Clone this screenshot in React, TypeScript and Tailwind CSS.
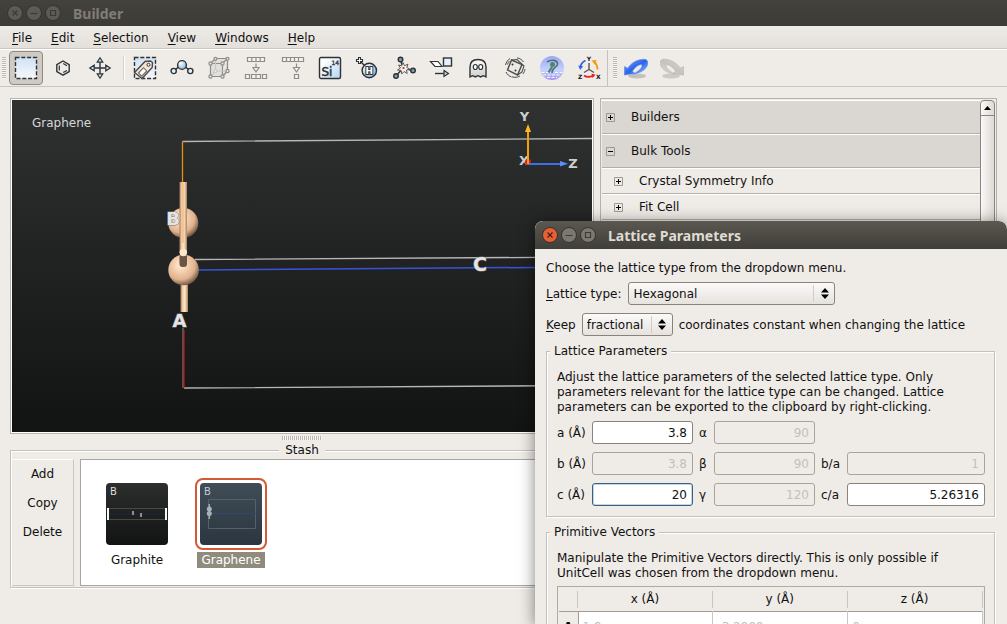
import { useState, type ReactNode } from "react";

interface Tool {
  label: string;
  icon: ReactNode;
}

const INK = "#2e3436";
const GREY = "#8e8c88";

function Icon({ children }: { children: ReactNode }) {
  return (
    <svg width="24" height="24" viewBox="0 0 24 24" fill="none" stroke={INK} strokeWidth="1.4" className="shrink-0">
      {children}
    </svg>
  );
}

const selectTools: Tool[] = [
  {
    label: "Select",
    icon: (
      <Icon>
        <rect x="1.5" y="1.5" width="21" height="21" fill="url(#sky)" strokeDasharray="4 1.8" />
      </Icon>
    ),
  },
  {
    label: "Sketch",
    icon: (
      <Icon>
        <path d="M12 5l6.200 3.600v7L12 19.200l-6.200-3.600v-7z" />
        <path d="M8.300 9.600v5M12.200 7.500l3.800 2.200M12.200 16.600l3.800-2.200" strokeWidth="1.200" />
      </Icon>
    ),
  },
  {
    label: "Move",
    icon: (
      <Icon>
        <path d="M12 6v12M6 12h12" />
        <path
          d="M12 1.800l2.800 4.400H9.200zM12 22.200l2.800-4.400H9.200zM1.800 12l4.400-2.800v5.600zM22.200 12l-4.400-2.800v5.600z"
          fill="#dbe7f4"
          strokeWidth="1.200"
        />
      </Icon>
    ),
  },
];

const editTools: Tool[] = [
  {
    label: "Tags",
    icon: (
      <Icon>
        <rect x="1.500" y="1.500" width="21" height="21" fill="url(#sky)" strokeDasharray="4 1.800" />
        <path d="M1.500 16.500L12 5.500l5.500-.5 2 1.500-.3 5L9 22.500z" fill="#f6e2cf" stroke="#4a4a4a" />
        <path d="M5.500 17l5-5.300 3.200 3.200-5 5.200z" fill="#fff" stroke="#6b6b6b" strokeWidth="1.100" />
        <circle cx="15.500" cy="8.800" r="1.500" fill="#fff" strokeWidth="1" />
      </Icon>
    ),
  },
  {
    label: "Bonds",
    icon: (
      <Icon>
        <path d="M5 14l4-3.500M19 14l-4-3.500" />
        <circle cx="12" cy="9" r="4.400" fill="url(#ball)" />
        <circle cx="3.700" cy="15" r="2.600" fill="#e4edf7" />
        <circle cx="20.300" cy="15" r="2.600" fill="#e4edf7" />
      </Icon>
    ),
  },
  {
    label: "Supercell",
    icon: (
      <Icon>
        <g stroke={GREY} strokeWidth="1.200">
          <path d="M3.500 7.500h12v13h-12zM3.500 7.500l5-5h12l-5 5M20.500 2.500v12.500l-5 5.500" fill="#e2e0dc" />
          <path d="M8.500 2.500V15h12M8.500 15l-5 5.500" stroke="#c9c7c3" />
          <g fill="#efedea">
            <circle cx="3.500" cy="7.500" r="1.600" />
            <circle cx="15.500" cy="7.500" r="1.600" />
            <circle cx="3.500" cy="20.500" r="1.600" />
            <circle cx="15.500" cy="20.500" r="1.600" />
            <circle cx="8.500" cy="2.800" r="1.500" />
            <circle cx="20.500" cy="2.800" r="1.500" />
            <circle cx="20.500" cy="15" r="1.600" />
            <circle cx="8.500" cy="15" r="1.500" stroke="#c9c7c3" />
          </g>
        </g>
      </Icon>
    ),
  },
  {
    label: "Split layers",
    icon: (
      <Icon>
        <g stroke={GREY} fill="#f4f2ef" strokeWidth="1.200">
          <path d="M3.500 1.500h17v4h-17zM7.800 1.500v4M12 1.500v4M16.200 1.500v4" />
          <path d="M12 7.500v4" />
          <path d="M9 11.500h6l-3 4.500z" />
          <path d="M1.500 18.500h4v4h-4zM7.500 18.500h9v4h-9zM12 18.500v4M18.500 18.500h4v4h-4z" />
        </g>
      </Icon>
    ),
  },
  {
    label: "Reduce layers",
    icon: (
      <Icon>
        <g stroke={GREY} fill="#f4f2ef" strokeWidth="1.200">
          <path d="M1.500 1.500h21v4h-21zM5.500 1.500v4M9.500 1.500v4M13.500 1.500v4M17.500 1.500v4" />
          <path d="M15.500 7.500v4" />
          <path d="M12.500 11.500h6l-3 4.500z" />
          <path d="M13.500 18.500h4v4h-4z" />
        </g>
      </Icon>
    ),
  },
  {
    label: "Element",
    icon: (
      <Icon>
        <rect x="1.500" y="1.500" width="21" height="21" rx="1.500" fill="url(#tile)" />
        <g fill={INK} stroke={INK} fontFamily="'DejaVu Sans', sans-serif">
          <text x="3.500" y="19.500" fontSize="12" strokeWidth=".5">Si</text>
          <text x="13.500" y="8.800" fontSize="6" strokeWidth=".3">14</text>
        </g>
      </Icon>
    ),
  },
  {
    label: "Add hydrogen",
    icon: (
      <Icon>
        <path d="M6 6l4 4" />
        <circle cx="14.300" cy="14.500" r="7.200" fill="url(#ball)" />
        <path d="M3.500 1.500h2v2h2v2h-2v2h-2v-2h-2v-2h2z" fill="#fff" strokeWidth="1.100" />
        <text
          x="14.300"
          y="18"
          fontSize="9"
          fontWeight="bold"
          fontFamily="'DejaVu Sans', sans-serif"
          textAnchor="middle"
          fill="#fff"
          strokeWidth="2"
          paintOrder="stroke"
        >
          H
        </text>
      </Icon>
    ),
  },
  {
    label: "Passivate",
    icon: (
      <Icon>
        <path d="M11 12L8.500 4M11 12l9.500 2.500M11 12l-7 8" />
        <path
          d="M11 6.500l1.500 3.200 3.500-1.500-1.200 3.200 3 1.800-3.300.8.700 3.500-3-2-2.500 2.500-.5-3.500-3.700-.5 3-2-2-3 3.200.8z"
          fill="#f3f1ee"
          stroke="#5c5c5c"
          strokeWidth="1"
        />
        <circle cx="11.500" cy="12" r="1.100" fill="#e11" stroke="none" />
        <circle cx="8.500" cy="3.500" r="2.300" fill="#7f9dbd" />
        <circle cx="4" cy="20" r="2.300" fill="#7f9dbd" />
        <circle cx="21" cy="14.500" r="2.300" fill="#7f9dbd" />
      </Icon>
    ),
  },
  {
    label: "Transform cell",
    icon: (
      <Icon>
        <path d="M1.500 5.500h7.500l4 5H6z" fill="#fff" strokeWidth="1.200" />
        <rect x="14.500" y="2" width="8" height="8" fill="#e9f1fa" />
        <path d="M6 17.500h10" />
        <path d="M15 14.500l4.500 3-4.500 3z" fill="#b9d3ec" strokeWidth="1.200" />
      </Icon>
    ),
  },
  {
    label: "Ghost atom",
    icon: (
      <Icon>
        <path
          d="M4 21V11c0-5 3-7.500 8-7.500s8 2.500 8 7.500v10l-2.700-1.300-2.600 1.300-2.700-1.300L9.300 21l-2.600-1.300z"
          fill="url(#ghost)"
        />
        <ellipse cx="9.300" cy="11" rx="2" ry="2.500" fill="#fff" strokeWidth="1.200" />
        <ellipse cx="14.700" cy="11" rx="2" ry="2.500" fill="#fff" strokeWidth="1.200" />
      </Icon>
    ),
  },
  {
    label: "Rattle",
    icon: (
      <Icon>
        <g stroke="#4b4d4e">
          <path d="M8.500 4l10.500 4.500-4.500 10.500L4.500 14z" fill="#eceae6" />
          <path d="M8.500 4l5.500-.5L21 10l-2 6-4.500 3M19 8.500l2 1.500" strokeWidth="1.100" />
          <path d="M2.500 9c.8-3 2.200-5 4.500-6.500M4.500 8.500c.3-1.500 1-2.700 2-3.500M14 1.800c3 .6 5 2 6.500 4.200M3 16c1.200 2.500 3 4 5.500 5M9 20.800c3 1 5.500.6 8-.8M22 13c-.2 2-1 3.600-2.200 5" strokeWidth="1" />
        </g>
        <circle cx="9.500" cy="8.500" r="1" fill={INK} stroke="none" />
        <circle cx="12.500" cy="14.500" r="1" fill={INK} stroke="none" />
      </Icon>
    ),
  },
  {
    label: "Plugin",
    icon: (
      <Icon>
        <circle cx="12" cy="12" r="12" fill="url(#orb)" stroke="none" />
        <path d="M1.500 16.500h21M3 19h18M7 21.500h10" stroke="#fff" strokeWidth=".9" strokeDasharray="3 1.500" />
        <path d="M7 6c4-3 10.500-2 10.500 2 0 3.500-5.500 3-5.500 9" stroke="#51727f" strokeWidth="1.700" />
        <path d="M12 11l-3.500 5.500" stroke="#55806f" strokeWidth="2.200" />
        <circle cx="12.500" cy="8.500" r="2.500" fill="#528568" stroke="none" />
      </Icon>
    ),
  },
  {
    label: "Rotate axes",
    icon: (
      <Icon>
        <path d="M12 7v7M12 13.500l-5 3M12 13.500l5 3" stroke="#555" />
        <path d="M8.500 4.500C5.500 6 4 8 3.500 10.500" stroke="#3465e0" strokeWidth="1.800" />
        <path d="M1.200 9.500l5 .8-3 3.700z" fill="#3465e0" stroke="none" />
        <path d="M20.500 13.500c0-3-1-5.500-3-7.500" stroke="#f59b0c" strokeWidth="1.800" />
        <path d="M14.500 4.500l5-.5-1.500 4.500z" fill="#f59b0c" stroke="none" />
        <path d="M7 19.500c2.500 1.700 6 1.700 9 .2" stroke="#ee1c1c" strokeWidth="1.800" />
        <path d="M14.500 17.500l4 1.300-3 3.300z" fill="#ee1c1c" stroke="none" />
        <g fill="#111" stroke="none" fontFamily="'DejaVu Sans', sans-serif" fontWeight="bold" fontSize="6">
          <text x="9.700" y="5">Y</text>
          <text x="1" y="23">Z</text>
          <text x="19" y="23">X</text>
        </g>
      </Icon>
    ),
  },
];

const arrowPath =
  "M.3 19L.5 10.500l3.200 1.700C7.500 6.500 14 3.200 20.500 3.300c4 .2 4 4.700 2 7.700-2.500 4-8 6.500-13.500 7 3.500-1.500 9-5.200 9-8.200 0-1.500-1.500-1.500-3-.7-2.500 1.200-5 3.700-6.500 6.200l2.300 2.200z";

const historyTools: Tool[] = [
  {
    label: "Undo",
    icon: (
      <Icon>
        <ellipse cx="13" cy="20" rx="9" ry="2.500" fill="#000" opacity=".18" stroke="none" />
        <path d={arrowPath} fill="url(#undo)" stroke="#5c86e6" strokeWidth=".6" />
      </Icon>
    ),
  },
  {
    label: "Redo",
    icon: (
      <Icon>
        <ellipse cx="11" cy="20" rx="9" ry="2.500" fill="#000" opacity=".14" stroke="none" />
        <path d={arrowPath} fill="url(#redo)" stroke="#b3b1ad" strokeWidth=".6" transform="matrix(-1 0 0 1 24 0)" />
      </Icon>
    ),
  },
];

const menus = ["File", "Edit", "Selection", "View", "Windows", "Help"];

const treeRows = [
  { label: "Builders", open: false, child: false },
  { label: "Bulk Tools", open: true, child: false },
  { label: "Crystal Symmetry Info", open: false, child: true },
  { label: "Fit Cell", open: false, child: true },
];

// gradients shared by the toolbar icons and the 3D view
function Gradients() {
  return (
    <svg width="0" height="0" className="absolute" aria-hidden="true">
      <defs>
        <linearGradient id="sky" x2="0" y2="1">
          <stop stopColor="#cfe2f6" />
          <stop offset="1" stopColor="#f7f8fa" />
        </linearGradient>
        <linearGradient id="tile" x2="1" y2="1">
          <stop offset=".2" stopColor="#fff" />
          <stop offset="1" stopColor="#b4d4f2" />
        </linearGradient>
        <linearGradient id="ghost" x2="0" y2="1">
          <stop stopColor="#fbfbfb" />
          <stop offset="1" stopColor="#cfcfcf" />
        </linearGradient>
        <linearGradient id="orb" x2="0" y2="1">
          <stop stopColor="#9ea6f7" />
          <stop offset=".6" stopColor="#c3d3fa" />
          <stop offset="1" stopColor="#a493f2" />
        </linearGradient>
        <linearGradient id="undo" x2="1" y2="1">
          <stop stopColor="#7fb0fa" />
          <stop offset=".5" stopColor="#2c62ee" />
          <stop offset="1" stopColor="#9fd0fb" />
        </linearGradient>
        <linearGradient id="redo" x2="1" y2="1">
          <stop stopColor="#dddbd7" />
          <stop offset=".5" stopColor="#c4c2be" />
          <stop offset="1" stopColor="#e2e0dc" />
        </linearGradient>
        <radialGradient id="ball" cx=".35" cy=".3" r=".8">
          <stop stopColor="#fff" />
          <stop offset="1" stopColor="#7fb0de" />
        </radialGradient>
        <radialGradient id="atom" cx=".4" cy=".34" r=".68">
          <stop stopColor="#ffecd8" />
          <stop offset=".3" stopColor="#f8d3b2" />
          <stop offset=".7" stopColor="#dfb28e" />
          <stop offset="1" stopColor="#6f5542" />
        </radialGradient>
        <linearGradient id="bond">
          <stop stopColor="#a07a5c" />
          <stop offset=".3" stopColor="#f6d2ac" />
          <stop offset=".6" stopColor="#ffe6c4" />
          <stop offset="1" stopColor="#a5825f" />
        </linearGradient>
      </defs>
    </svg>
  );
}

function Mnemonic({ text }: { text: string }) {
  return (
    <>
      <span className="underline underline-offset-2">{text[0]}</span>
      {text.slice(1)}
    </>
  );
}

function TitleBar({ title, active = false }: { title: string; active?: boolean }) {
  const shade = active
    ? "h-7 rounded-t-lg bg-linear-to-b from-[#5b5850] to-[#3f3e39] text-[#dfdbd2]"
    : "h-[26px] bg-linear-to-b from-[#43423d] to-[#3c3b37] text-[#807d76]";
  const knob = active ? "border-[#35342f] bg-[#7b786f] text-[#3a3935]" : "border-[#35342f] bg-[#5d5b55] text-[#3a3935]";
  const close = active ? "border-[#35342f] bg-[#e95f35] text-[#3c1f14]" : knob;

  return (
    <header className={`flex shrink-0 items-center gap-[3px] pl-[7px] ${shade}`}>
      <button aria-label="Close" className={`size-4 rounded-full border ${close}`}>
        <svg viewBox="0 0 14 14" fill="none" stroke="currentColor" strokeWidth="1.100">
          <path d="M4.500 4.500l5 5M9.500 4.500l-5 5" />
        </svg>
      </button>
      <button aria-label="Minimize" className={`size-4 rounded-full border ${knob}`}>
        <svg viewBox="0 0 14 14" fill="none" stroke="currentColor" strokeWidth="1.100">
          <path d="M3.500 7.500h7" />
        </svg>
      </button>
      <button aria-label="Maximize" className={`size-4 rounded-full border ${knob}`}>
        <svg viewBox="0 0 14 14" fill="none" stroke="currentColor" strokeWidth="1.100">
          <path d="M4.500 4.500h5v5h-5z" />
        </svg>
      </button>
      <h1 className="ml-[9px] font-['Noto_Sans',sans-serif] text-[14px] font-bold">{title}</h1>
    </header>
  );
}

function ToolButton({ tool, pressed = false }: { tool: Tool; pressed?: boolean }) {
  const state = pressed ? "border-[#8f8983] bg-[#cfcac4]" : "border-transparent";
  return (
    <button
      aria-label={tool.label}
      className={`flex h-[34px] w-[34px] items-center justify-center rounded border ${state}`}
    >
      {tool.icon}
    </button>
  );
}

function Grip() {
  return (
    <div className="h-[22px] w-1 bg-[repeating-linear-gradient(to_bottom,#bab6b0_0_1px,#f8f7f5_1px_2px)]" />
  );
}

function Viewport() {
  return (
    <section className="min-h-0 flex-1 border border-[#b8b4ae] bg-white p-px">
      <svg
        viewBox="0 0 580 334"
        preserveAspectRatio="xMinYMin slice"
        className="h-full w-full bg-linear-to-b from-[#303232] to-[#121313]"
        fill="none"
        fontFamily="'DejaVu Sans', sans-serif"
      >
        <text x="20" y="27" fontSize="12" fill="#d8d8d8">Graphene</text>
        <path d="M170.500 41.500L580 38.500M172 288l408-2.500M183 159.500l397-2.500" stroke="#b4b8b6" strokeWidth="1.300" />
        <path d="M186 170l394-3" stroke="#3555d8" strokeWidth="1.500" />
        <path d="M171 228v60" stroke="#8c8c8c" strokeWidth="1" />
        <path d="M172 230v58" stroke="#c81818" strokeWidth="1.200" />

        <circle cx="171.300" cy="123" r="15" fill="url(#atom)" />
        <rect x="167.500" y="82" width="7.500" height="70" fill="url(#bond)" />
        <rect x="168.500" y="184" width="7.500" height="28" fill="url(#bond)" />
        <circle cx="171.600" cy="170" r="15.300" fill="url(#atom)" />
        <rect x="167.500" y="154" width="7.500" height="13" rx="3" fill="#6d5544" />
        <circle cx="171.300" cy="152.500" r="3.800" fill="#fbe6c6" />
        <path d="M170.500 41.500v41" stroke="#e8900c" strokeWidth="1.300" />
        <path d="M171 83v60" stroke="#f3a767" strokeWidth="1" />

        <g fill="#e4e4e6" fontWeight="bold" textAnchor="middle" stroke="#7d7672" strokeWidth="1" paintOrder="stroke">
          <text x="161" y="125" fontSize="18">B</text>
          <text x="167.500" y="227" fontSize="18">A</text>
          <text x="468" y="171" fontSize="19">C</text>
        </g>
        <g fill="#cfcfcf" fontWeight="bold" textAnchor="middle" fontSize="13">
          <text x="512.500" y="21">Y</text>
          <text x="561" y="68">Z</text>
          <text x="512" y="65">X</text>
        </g>
        <circle cx="516" cy="62" r="3" fill="#ee1111" />
        <path d="M516 64h32" stroke="#3d6fe8" strokeWidth="2" />
        <path d="M548 61l8 2.800-8 2.700z" fill="#5b8dff" />
        <path d="M516 64V32" stroke="#f0a30a" strokeWidth="2" />
        <path d="M513 32l3-8 3 8z" fill="#ffb81c" />
      </svg>
    </section>
  );
}

function GraphiteThumb() {
  return (
    <svg viewBox="0 0 62 62" className="size-[62px] rounded bg-linear-to-b from-[#2d2f2f] to-[#121313]">
      <text x="4" y="12" fontSize="10" fill="#dcdcdc" fontFamily="'DejaVu Sans', sans-serif">B</text>
      <path d="M3 25.500h56M3 36.500h56" stroke="#454a48" />
      <path d="M3 31h56" stroke="#1e2744" />
      <path d="M2 25v12M60 25v12" stroke="#f4fbf8" strokeWidth="2" />
      <path d="M27 28v4M35 30v4" stroke="#b5b5b5" strokeWidth="1.500" />
    </svg>
  );
}

function GrapheneThumb() {
  return (
    <svg viewBox="0 0 62 62" className="size-[62px] rounded bg-linear-to-b from-[#404c56] to-[#2b3641]">
      <text x="4" y="12" fontSize="10" fill="#c3ccd4" fontFamily="'DejaVu Sans', sans-serif">B</text>
      <path d="M8.500 16.500h47v29h-47z" stroke="#53616c" fill="none" />
      <path d="M9 30.500h47" stroke="#32486a" />
      <path d="M9.300 21v15" stroke="#a3a9ad" strokeWidth="1.500" />
      <circle cx="9.300" cy="26" r="2.500" fill="#a9b1b6" />
      <circle cx="9.300" cy="30.500" r="2.500" fill="#a9b1b6" />
    </svg>
  );
}

function Stash() {
  const [selected, setSelected] = useState("Graphene");
  const items = [
    { name: "Graphite", thumb: <GraphiteThumb /> },
    { name: "Graphene", thumb: <GrapheneThumb /> },
  ];

  return (
    <fieldset className="flex min-w-0 border border-[#c4c1bc] p-px shadow-[inset_1px_1px_0_#fff,1px_1px_0_#fff]">
      <legend className="mx-auto bg-[#efebe7] px-[6px] leading-4">Stash</legend>
      <div className="flex h-[127px] w-[62px] shrink-0 flex-col border-b border-r border-t border-[#c9c6c1] border-t-white">
        {["Add", "Copy", "Delete"].map((action) => (
          <button key={action} className="h-[29px]">
            {action}
          </button>
        ))}
      </div>
      <div className="ml-[6px] flex flex-1 gap-[22px] border border-[#a9a6a2] bg-white pl-5 pt-[18px]">
        {items.map(({ name, thumb }) => {
          const active = name === selected;
          return (
            <button key={name} className="flex h-[90px] w-[72px] flex-col items-center" onClick={() => setSelected(name)}>
              <span className={`rounded-lg border-2 p-[3px] ${active ? "border-[#d35a34]" : "border-transparent"}`}>
                {thumb}
              </span>
              <span className={`mt-[2px] px-1 leading-4 ${active ? "bg-[#8f8b7d] text-white" : ""}`}>{name}</span>
            </button>
          );
        })}
      </div>
    </fieldset>
  );
}

function ToolTree() {
  return (
    <aside className="flex border border-[#b5b1ab] p-px">
      <div className="flex-1">
        {treeRows.map((row) => (
          <button
            key={row.label}
            className={`flex w-full items-center gap-4 border-b border-t border-b-[#b3b0ab] border-t-white text-left leading-4 ${
              row.child ? "h-[26px] pl-3" : "h-[34px] bg-[#dad6d1] pl-1"
            }`}
          >
            <svg width="9" height="9" viewBox="0 0 9 9" fill="none" stroke="#000" className="shrink-0">
              <path d="M.5.5h8v8h-8z" stroke="#9c9994" />
              <path d={row.open ? "M2 4.500h5" : "M2 4.500h5M4.500 2v5"} />
            </svg>
            {row.label}
          </button>
        ))}
      </div>
      <div className="w-[15px] rounded-t border border-[#8c857d] bg-linear-to-r from-[#faf9f8] to-[#dedad5]">
        <button aria-label="Scroll up" className="flex h-[15px] w-full items-center justify-center border-b border-[#8c857d]">
          <svg width="7" height="4" viewBox="0 0 7 4">
            <path d="M0 4h7L3.500 0z" />
          </svg>
        </button>
      </div>
    </aside>
  );
}

function Dropdown({ id, value, width }: { id: string; value: string; width: string }) {
  return (
    <div className={`relative ${width}`}>
      <select
        id={id}
        defaultValue={value}
        className="h-[23px] w-full appearance-none rounded-[3px] border border-[#8a837b] bg-linear-to-b from-[#fbfaf9] to-[#e6e2dd] pl-1 leading-4 outline-none"
      >
        <option>{value}</option>
      </select>
      <div className="pointer-events-none absolute inset-y-[3px] right-0 flex w-[22px] items-center justify-center border-l border-[#cfcbc6]">
        <svg width="8" height="11" viewBox="0 0 8 11">
          <path d="M0 4.500h8L4 0zM0 6.500h8L4 11z" />
        </svg>
      </div>
    </div>
  );
}

function Field({ id, label, value, disabled = false, focused = false }: {
  id: string;
  label: string;
  value: string;
  disabled?: boolean;
  focused?: boolean;
}) {
  const [text, setText] = useState(value);
  const look = disabled
    ? "border-[#a9a39c] bg-[#efebe7] text-[#c3c0bc]"
    : focused
      ? "border-[#3b5e82] bg-white shadow-[inset_0_0_0_1px_#c3d6e8]"
      : "border-[#8a837b] bg-white";

  return (
    <>
      <label htmlFor={id} className="pt-[2px]">{label}</label>
      <input
        id={id}
        value={text}
        disabled={disabled}
        onChange={(e) => setText(e.target.value)}
        className={`h-[23px] w-full min-w-0 rounded-[3px] border px-[5px] text-right outline-none ${look}`}
      />
    </>
  );
}

const groupBox =
  "min-w-0 border border-[#c4c1bc] pb-[10px] pl-[10px] pr-[9px] pt-[11px] shadow-[inset_1px_1px_0_#fff,1px_1px_0_#fff]";

function LatticeDialog() {
  return (
    <section
      role="dialog"
      aria-label="Lattice Parameters"
      className="absolute bottom-0 left-[535px] right-0 top-[221px] flex flex-col overflow-hidden rounded-t-lg bg-[#efebe7] shadow-[0_2px_16px_rgba(0,0,0,0.5)]"
    >
      <TitleBar title="Lattice Parameters" active />
      <div className="flex flex-col gap-[7px] pl-[11px] pr-3 pt-[11px]">
        <p className="-mb-px leading-4">Choose the lattice type from the dropdown menu.</p>
        <div className="flex items-center gap-[7px]">
          <label htmlFor="lattice-type" className="pt-px">
            <Mnemonic text="Lattice type:" />
          </label>
          <Dropdown id="lattice-type" value="Hexagonal" width="w-[207px]" />
        </div>
        <div className="mt-px flex items-center gap-[6px]">
          <label htmlFor="keep" className="pt-[2px]">
            <Mnemonic text="Keep" />
          </label>
          <Dropdown id="keep" value="fractional" width="w-[91px]" />
          <span className="pt-[2px]">coordinates constant when changing the lattice</span>
        </div>

        <fieldset className={groupBox}>
          <legend className="-ml-[7px] bg-[#efebe7] px-1 leading-4">Lattice Parameters</legend>
          <p>
            Adjust the lattice parameters of the selected lattice type. Only
            <br />
            parameters relevant for the lattice type can be changed. Lattice
            <br />
            parameters can be exported to the clipboard by right-clicking.
          </p>
          <div className="mt-[6px] grid grid-cols-[29px_101px_9px_101px_20px_1fr] items-center gap-x-[6px] gap-y-2">
            <Field id="a" label="a&nbsp;(Å)" value="3.8" />
            <Field id="alpha" label="α" value="90" disabled />
            <span />
            <span />
            <Field id="b" label="b&nbsp;(Å)" value="3.8" disabled />
            <Field id="beta" label="β" value="90" disabled />
            <Field id="ba" label="b/a" value="1" disabled />
            <Field id="c" label="c&nbsp;(Å)" value="20" focused />
            <Field id="gamma" label="γ" value="120" disabled />
            <Field id="ca" label="c/a" value="5.26316" />
          </div>
        </fieldset>

        <fieldset className={groupBox}>
          <legend className="-ml-[7px] bg-[#efebe7] px-1 leading-4">Primitive Vectors</legend>
          <p>
            Manipulate the Primitive Vectors directly. This is only possible if
            <br />
            UnitCell was chosen from the dropdown menu.
          </p>
          <div className="mt-[5px] border border-[#aeaaa4] p-px">
            <table className="w-full table-fixed border-collapse">
              <thead>
                <tr className="border-b border-[#a19c96]">
                  <th className="w-[19px] p-0">
                    <div className="h-[17px] border-r border-[#c9c6c1]" />
                  </th>
                  {["x (Å)", "y (Å)", "z (Å)"].map((axis) => (
                    <th key={axis} className="px-0 py-[3px] font-normal">
                      <div className="h-[17px] border-r border-[#c9c6c1] pt-px">{axis}</div>
                    </th>
                  ))}
                </tr>
              </thead>
              <tbody>
                <tr className="h-[31px] border-b border-[#c9c6c1] text-[#c3c0bc]">
                  <th className="border-r border-[#a19c96] font-bold text-black">A</th>
                  <td className="border-r border-[#c9c6c1] bg-white pl-1">1.9</td>
                  <td className="border-r border-[#c9c6c1] bg-white pl-1">-3.2909</td>
                  <td className="border-r border-[#c9c6c1] bg-white pl-1">0</td>
                </tr>
              </tbody>
            </table>
          </div>
        </fieldset>
      </div>
    </section>
  );
}

export default function App() {
  return (
    <div className="relative flex h-screen flex-col overflow-hidden bg-[#efebe7] font-['DejaVu_Sans',sans-serif] text-[12px] leading-[15px] text-[#111]">
      <Gradients />
      <TitleBar title="Builder" />

      <nav className="flex h-[23px] shrink-0 items-center gap-[19px] border-b border-[#cbc7c2] bg-linear-to-b from-[#efebe7] to-[#e3dfda] pl-3 pt-[2px]">
        {menus.map((menu) => (
          <button key={menu}>
            <Mnemonic text={menu} />
          </button>
        ))}
      </nav>

      <div className="flex h-[38px] shrink-0 items-center border-b border-t border-b-[#c9c5c0] border-t-white">
        <div className="flex h-full items-center gap-[3px] border-r border-[#c4c0bb] pl-[2px] pr-px">
          <Grip />
          {selectTools.map((tool, i) => (
            <ToolButton key={tool.label} tool={tool} pressed={i === 0} />
          ))}
          <div className="ml-[3px] h-6 w-[2px] border-l border-[#d3cfca] bg-white" />
          {editTools.map((tool) => (
            <ToolButton key={tool.label} tool={tool} />
          ))}
        </div>
        <div className="flex items-center gap-[2px] pl-[5px]">
          <Grip />
          {historyTools.map((tool) => (
            <ToolButton key={tool.label} tool={tool} />
          ))}
        </div>
      </div>

      <main className="grid min-h-0 flex-1 grid-cols-[584fr_397fr] gap-[6px] px-[10px] pb-9 pt-[11px]">
        <div className="flex min-h-0 min-w-0 flex-col">
          <Viewport />
          <div className="mx-auto my-[2px] h-1 w-10 shrink-0 bg-[repeating-linear-gradient(to_right,#bab6b0_0_1px,#f8f7f5_1px_2px)]" />
          <Stash />
        </div>
        <ToolTree />
      </main>

      <LatticeDialog />
    </div>
  );
}
